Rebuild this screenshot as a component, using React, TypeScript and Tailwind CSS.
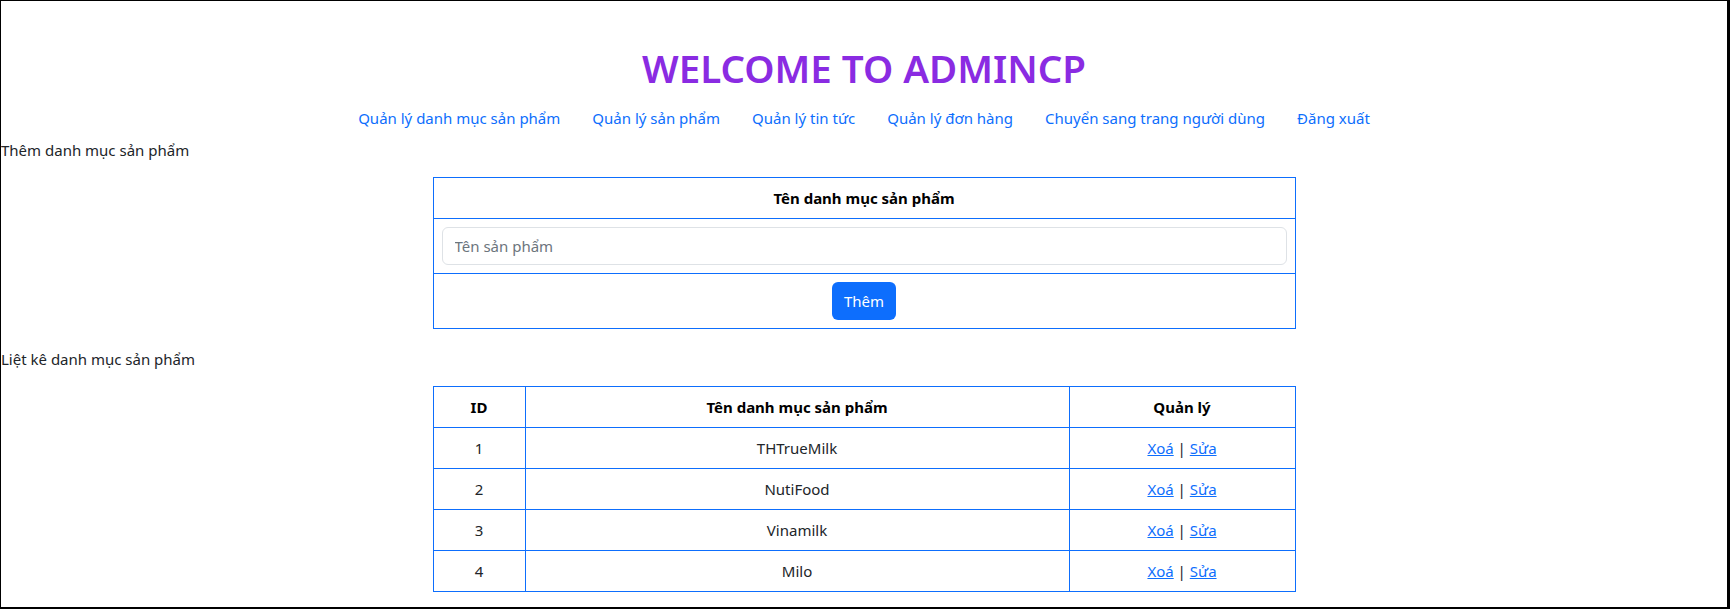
const navLinks = [
  'Quản lý danh mục sản phẩm',
  'Quản lý sản phẩm',
  'Quản lý tin tức',
  'Quản lý đơn hàng',
  'Chuyển sang trang người dùng',
  'Đăng xuất',
];

const categories = [
  { id: 1, name: 'THTrueMilk' },
  { id: 2, name: 'NutiFood' },
  { id: 3, name: 'Vinamilk' },
  { id: 4, name: 'Milo' },
];

export default function App() {
  return (
    <div
      className="h-[609px] w-full overflow-hidden border border-r-[3px] border-b-2 border-black bg-white text-[15px] text-[#212529]"
      style={{ fontFamily: '"Noto Sans", "Open Sans", sans-serif' }}
    >
      <h1 className="mt-[43px] text-center text-[38.5px] leading-[48px] font-semibold text-[#8a2be2]">
        WELCOME TO ADMINCP
      </h1>

      <nav className="mt-[6px] flex justify-center">
        {navLinks.map((label) => (
          <a key={label} href="#" className="px-4 py-2 leading-6 text-[#0d6efd]">
            {label}
          </a>
        ))}
      </nav>

      <p className="leading-6">Thêm danh mục sản phẩm</p>

      <table className="mx-auto mt-[15px] w-1/2 border-collapse">
        <tbody>
          <tr>
            <th className="border border-[#0d6efd] p-2 leading-6 font-bold text-black">Tên danh mục sản phẩm</th>
          </tr>
          <tr>
            <td className="border border-[#0d6efd] p-2">
              <input
                type="text"
                placeholder="Tên sản phẩm"
                className="block h-[38px] w-full rounded-md border border-[#dee2e6] px-3 leading-6 placeholder:text-[#6c757d]"
              />
            </td>
          </tr>
          <tr>
            <td className="border border-[#0d6efd] p-2 text-center">
              <button className="h-[38px] rounded-md bg-[#0d6efd] px-3 leading-6 text-white">Thêm</button>
            </td>
          </tr>
        </tbody>
      </table>

      <p className="mt-[18px] leading-6">Liệt kê danh mục sản phẩm</p>

      <table className="mx-auto mt-[15px] w-1/2 border-collapse text-center">
        <thead>
          <tr>
            <th className="w-[92px] border border-[#0d6efd] p-2 leading-6 font-bold text-black">ID</th>
            <th className="w-[544px] border border-[#0d6efd] p-2 leading-6 font-bold text-black">Tên danh mục sản phẩm</th>
            <th className="border border-[#0d6efd] p-2 leading-6 font-bold text-black">Quản lý</th>
          </tr>
        </thead>
        <tbody>
          {categories.map((c) => (
            <tr key={c.id}>
              <td className="border border-[#0d6efd] p-2 leading-6">{c.id}</td>
              <td className="border border-[#0d6efd] p-2 leading-6">{c.name}</td>
              <td className="border border-[#0d6efd] p-2 leading-6">
                <a href="#" className="text-[#0d6efd] underline">Xoá</a> | <a href="#" className="text-[#0d6efd] underline">Sửa</a>
              </td>
            </tr>
          ))}
        </tbody>
      </table>
    </div>
  );
}
